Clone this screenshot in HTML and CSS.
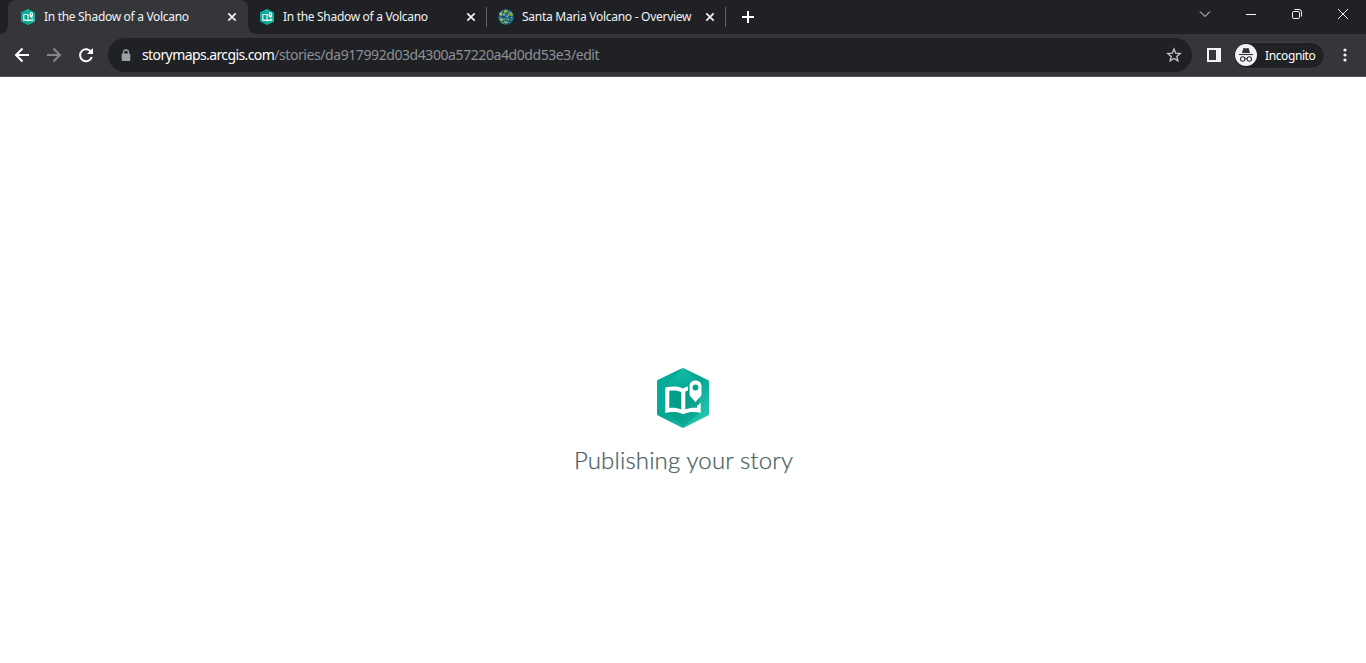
FILE: index.html
```html
<!DOCTYPE html>
<html lang="en">
<head>
<meta charset="utf-8">
<title>In the Shadow of a Volcano</title>
<link rel="stylesheet" href="styles.css">
</head>
<body>
<svg class="defs" aria-hidden="true">
  <defs>
    <linearGradient id="teal" x1="0" y1="0" x2="1" y2="1">
      <stop offset="0" stop-color="#0cb9a0"/><stop offset=".5" stop-color="#06a590"/><stop offset="1" stop-color="#2fd0b8"/>
    </linearGradient>
    <linearGradient id="facet" x1="0" y1="0" x2="0" y2="1">
      <stop offset="0" stop-color="#16c3ab"/><stop offset="1" stop-color="#06a892"/>
    </linearGradient>
    <symbol id="storymaps" viewBox="0 0 52 60">
      <path fill="url(#teal)" d="M24.700.6q1.300-.8 2.600 0L51 12q1 .5 1 1.600V46q0 1.100-1 1.600L27.300 59.400q-1.300.8-2.600 0L1 47.600q-1-.5-1-1.600V13.600Q0 12.500 1 12z"/>
      <path fill="#04ab98" d="M24.700.6 1 12q-1 .5-1 1.600V46L14 28z"/>
      <path fill="url(#facet)" d="M26 .3 12 14l14 9 14-9z" opacity=".7"/>
      <path fill="#008f7e" d="M12 20h30v25L26 59 12 45z" opacity=".4"/>
      <path fill="#fff" fill-rule="evenodd" d="M8.300 19.500c6-1.500 13-1.800 18 1 1.500-1.300 3-1.800 4.700-2v4c-1.500.2-2.300.7-2.700 1.500v17.500c3.500-1.700 7-2 11.700-1.800v-2c1.800-1 2.800-2 3.700-3.500v10.600c-6-1.100-12-1.200-17.400 1.400-5.500-2.600-12-2.500-18-1.200zM12.300 22.700v17.200c4.500-.4 8.200 0 12 1.600V24c-3.500-1.700-7.500-1.900-12-1.300z"/>
      <path fill="#fff" fill-rule="evenodd" d="M38.500 12.500c3.700 0 6 2.400 6 5.800v7.900c0 2.200-3.800 4.700-6 8.100-2.200-3.400-6-5.900-6-8.100v-7.900c0-3.400 2.300-5.800 6-5.800zm0 4a3 3 0 1 0 0 6 3 3 0 0 0 0-6z"/>
    </symbol>
    <symbol id="close" viewBox="0 0 16 16"><path d="m4.300 4.300 7.400 7.400m0-7.400-7.400 7.400" fill="none" stroke="#f1f3f4" stroke-width="1.700"/></symbol>
  </defs>
</svg>

<header class="browser">
  <div class="tabstrip">
    <div class="tab tab-active">
      <svg class="favicon"><use href="#storymaps"/></svg>
      <span class="tab-title">In the Shadow of a Volcano</span>
      <svg class="tab-close"><use href="#close"/></svg>
    </div>
    <div class="tab tab-second">
      <svg class="favicon"><use href="#storymaps"/></svg>
      <span class="tab-title">In the Shadow of a Volcano</span>
      <svg class="tab-close"><use href="#close"/></svg>
    </div>
    <div class="tab tab-third">
      <svg class="favicon" viewBox="0 0 16 16">
        <circle cx="8" cy="8" r="7.700" fill="#2374ae"/>
        <path fill="#8fbb4c" d="M3 3 7 .7l3 1-2 2.500-2 1L4.500 8 1 6.500zM10 4l2-2 3 3.500-1 3.500-2.500-.5-1.500-2zM2 9l4 .5L8 12l-2 3-3-2zM9.500 10l3 .5-2 4-1.500-1z"/>
        <path fill="none" stroke="#163a45" stroke-width=".8" d="M.5 6.500Q6 9 15.500 7M3 2.500Q8 6 13 3M2.500 13Q7 10 13.500 12.500M6 .8Q3 8 6.500 15.200M10.500 1Q14 8 10 15"/>
        <path fill="none" stroke="#92d6ed" stroke-width=".9" d="M1 4.500 4 4M8 7l2 1M3 11h2M11 4h2M7 14l2-1M5 6l2-1"/>
      </svg>
      <span class="tab-title">Santa Maria Volcano - Overview</span>
      <svg class="tab-close"><use href="#close"/></svg>
    </div>
    <svg class="new-tab" viewBox="0 0 16 16"><path d="M8 2v12M2 8h12" stroke="#fff" stroke-width="2"/></svg>
    <div class="window-controls">
      <svg viewBox="0 0 46 28"><path d="m18 11.500 5 5 5-5"/></svg>
      <svg viewBox="0 0 46 28"><path d="M18 14.500h10"/></svg>
      <svg viewBox="0 0 46 28"><rect x="18.500" y="11.500" width="7" height="7" rx="1.300"/><path d="M20.500 9.500H25q2.500 0 2.500 2.500v4.500"/></svg>
      <svg viewBox="0 0 46 28"><path d="m18 9 10 10m0-10L18 19"/></svg>
    </div>
  </div>

  <div class="toolbar">
    <svg class="nav" viewBox="0 0 32 32"><path d="M23 16H10m6.500-6.500L10 16l6.500 6.500" fill="none" stroke="#fff" stroke-width="2"/></svg>
    <svg class="nav" viewBox="0 0 32 32"><path d="M9 16h13m-6.500-6.500L22 16l-6.500 6.500" fill="none" stroke="#85868a" stroke-width="2"/></svg>
    <svg class="nav" viewBox="0 0 32 32"><path d="M21.300 13.300A6 6 0 1 0 21.800 18" fill="none" stroke="#fff" stroke-width="2"/><path d="M23 9v6h-6z" fill="#fff"/></svg>
    <div class="omnibox">
      <svg class="lock" viewBox="0 0 10 13"><path d="M2.500 5V3.500a2.500 2.500 0 0 1 5 0V5" fill="none" stroke="#9aa0a6" stroke-width="1.300"/><rect x=".7" y="4.500" width="8.600" height="7.500" rx="1" fill="#9aa0a6"/></svg>
      <div class="url"><span class="host">storymaps.arcgis.com</span><span class="path">/stories/da917992d03d4300a57220a4d0dd53e3/edit</span></div>
      <svg class="star" viewBox="0 0 16 16"><path d="m8 2 1.700 4.200 4.500.3-3.400 2.900 1.100 4.400L8 11.400l-3.900 2.400 1.100-4.400-3.400-2.900 4.500-.3z" fill="none" stroke="#c4c6c9" stroke-width="1.300"/></svg>
    </div>
    <svg class="panel" viewBox="0 0 14 14"><path d="M0 0h14v14H0zm2 2v10h7V2z" fill="#f1f3f4" fill-rule="evenodd"/></svg>
    <div class="profile">
      <svg viewBox="0 0 22 22"><circle cx="11" cy="11" r="11" fill="#f1f3f4"/><path d="M7 9l1.200-4.500q.3-.8 1.100-.5l1.700.5 1.700-.5q.8-.3 1.100.5L15 9z" fill="#303134"/><path d="M4 10.500h14" stroke="#303134" stroke-width="1.100"/><g fill="none" stroke="#303134" stroke-width="1.100"><circle cx="7.700" cy="15" r="2.200"/><circle cx="14.300" cy="15" r="2.200"/><path d="M9.900 14.800q1.100-.7 2.200 0"/></g></svg>
      <span>Incognito</span>
    </div>
    <svg class="menu" viewBox="0 0 4 16"><g fill="#f1f3f4"><circle cx="2" cy="3" r="1.600"/><circle cx="2" cy="8" r="1.600"/><circle cx="2" cy="13" r="1.600"/></g></svg>
  </div>
</header>

<main class="publishing">
  <svg class="logo"><use href="#storymaps"/></svg>
  <p class="status">Publishing your story</p>
</main>
</body>
</html>
```
FILE: styles.css
```css
* { box-sizing: border-box; }
body {
  margin: 0;
  height: 663px;
  display: flex;
  flex-direction: column;
  overflow: hidden;
  background: #fff;
  font-family: "Noto Sans", "Open Sans", sans-serif;
}
svg { display: block; flex: none; }
.defs { position: absolute; width: 0; height: 0; }

.browser { flex: none; height: 77px; background: #202124; }
.tabstrip { display: flex; align-items: center; height: 34px; padding-left: 8px; }
.tab {
  display: flex;
  align-items: center;
  width: 239px;
  height: 34px;
  padding: 0 8px 0 12px;
  color: #f1f3f4;
  background: linear-gradient(#5f6064, #5f6064) right 7px / 1px 20px no-repeat;
}
.tab-active {
  position: relative;
  width: 240px;
  margin-right: -1px;
  background: #35363a;
  border-radius: 8px 8px 0 0;
}
.tab-active::before, .tab-active::after {
  content: "";
  position: absolute;
  bottom: 0;
  width: 8px;
  height: 8px;
}
.tab-active::before { left: -8px; background: radial-gradient(circle at 0 0, transparent 7.500px, #35363a 8px); }
.tab-active::after { right: -8px; background: radial-gradient(circle at 100% 0, transparent 7.500px, #35363a 8px); }
.tab-second { width: 240px; }
.tab-third { padding-left: 11px; }
.favicon { width: 16px; height: 16px; margin-right: 8px; }
.tab-title { flex: 1; font-size: 12px; line-height: 16px; letter-spacing: -.31px; white-space: nowrap; }
.tab-third .tab-title { letter-spacing: -.27px; }
.tab-close { width: 16px; height: 16px; }
.new-tab { width: 16px; height: 16px; margin-left: 14px; }
.window-controls { display: flex; margin-left: auto; align-self: flex-start; }
.window-controls svg { width: 46px; height: 28px; fill: none; stroke: #f1f3f4; stroke-width: 1; }

.toolbar {
  display: flex;
  align-items: center;
  height: 43px;
  padding-left: 6px;
  background: #35363a;
  border-bottom: 1px solid #525257;
}
.nav { width: 32px; height: 32px; }
.omnibox {
  display: flex;
  align-items: center;
  width: 1084px;
  height: 34px;
  margin-left: 6px;
  padding: 0 10px 0 13px;
  border-radius: 17px;
  background: #202124;
}
.lock { width: 10px; height: 13px; margin-right: 11px; }
.url { flex: 1; font-size: 14px; line-height: 20px; white-space: nowrap; }
.host { color: #fff; letter-spacing: -.6px; }
.path { color: #8c9095; letter-spacing: -.42px; }
.star { width: 16px; height: 16px; }
.panel { width: 14px; height: 14px; margin-left: 15px; }
.profile {
  display: flex;
  align-items: center;
  gap: 8px;
  width: 92px;
  height: 27px;
  margin-left: 12px;
  padding-left: 1px;
  border: 1px solid #3e3f43;
  border-radius: 14px;
  background: #202124;
  color: #fff;
  font-size: 12px;
  letter-spacing: -.4px;
}
.profile svg { width: 22px; height: 22px; }
.menu { width: 4px; height: 16px; margin-left: 18px; }

.publishing { flex: 1; display: flex; flex-direction: column; align-items: center; padding-top: 291px; }
.logo { width: 52px; height: 60px; }
.status {
  margin: 16px 0 0 1px;
  color: #4a6063;
  font-family: Lato, sans-serif;
  font-size: 24px;
  font-weight: 300;
  line-height: 32px;
  letter-spacing: .15px;
  white-space: nowrap;
  -webkit-text-stroke: .25px #4a6063;
}
```
